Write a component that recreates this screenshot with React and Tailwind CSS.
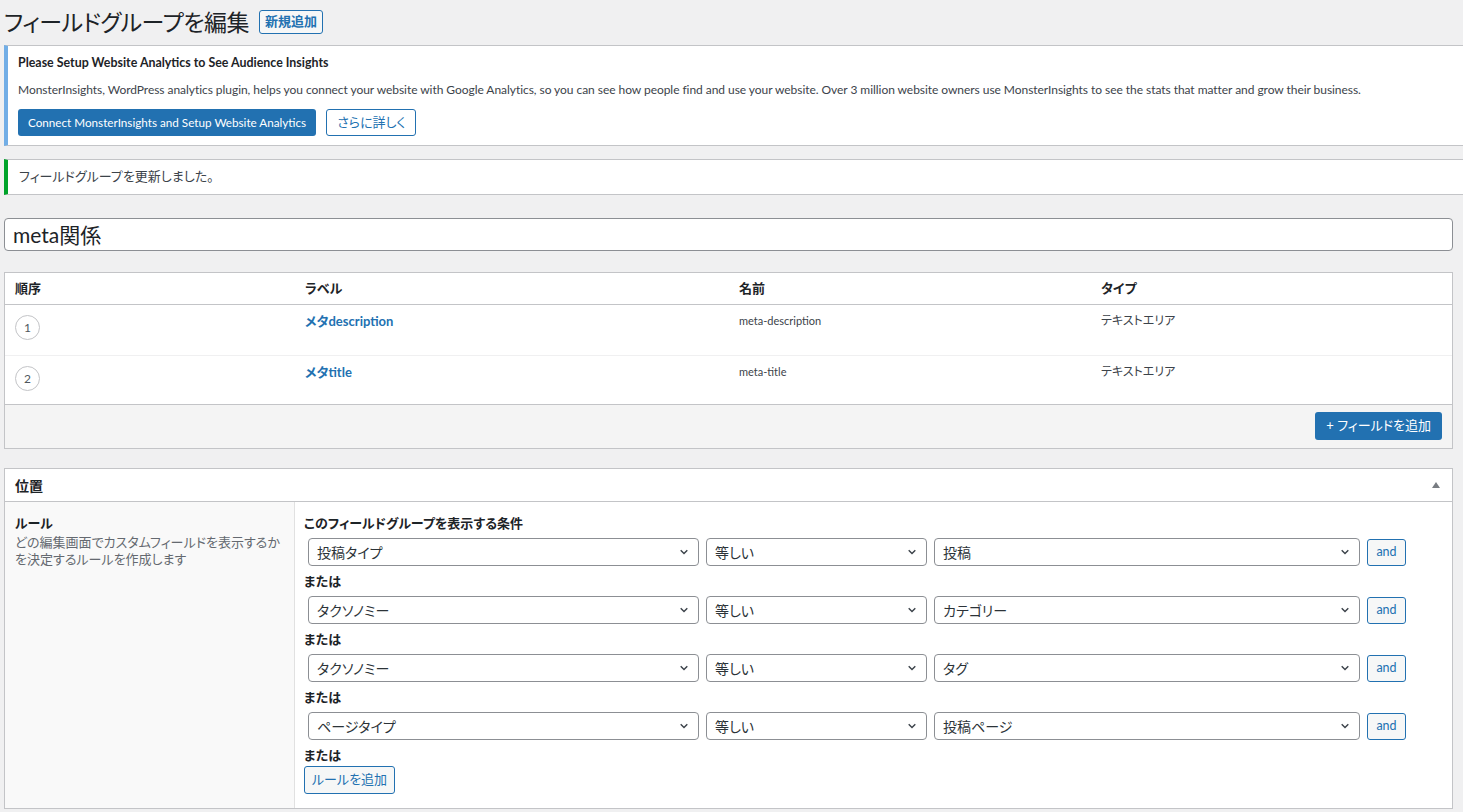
import { useState } from "react";

const fields = [
  { order: 1, label: "メタdescription", name: "meta-description", type: "テキストエリア" },
  { order: 2, label: "メタtitle", name: "meta-title", type: "テキストエリア" },
];

const rules = [
  { param: "投稿タイプ", op: "等しい", value: "投稿" },
  { param: "タクソノミー", op: "等しい", value: "カテゴリー" },
  { param: "タクソノミー", op: "等しい", value: "タグ" },
  { param: "ページタイプ", op: "等しい", value: "投稿ページ" },
];

function Chevron() {
  return (
    <svg width="12" height="12" viewBox="0 0 20 20" className="shrink-0 text-[#3c434a]">
      <path d="M4.5 7l5.5 5.5L15.5 7" fill="none" stroke="currentColor" strokeWidth="2.4" />
    </svg>
  );
}

function FakeSelect({ value, width }) {
  return (
    <div
      className={`flex h-[28px] items-center justify-between rounded-[4px] border border-[#8c8f94] bg-white pl-[8px] pr-[8px] text-[14px] text-[#2c3338] ${width}`}
    >
      <span>{value}</span>
      <Chevron />
    </div>
  );
}

function RuleRow({ rule }) {
  return (
    <div className="ml-[4px] flex items-center gap-[7px]">
      <FakeSelect value={rule.param} width="w-[391px]" />
      <FakeSelect value={rule.op} width="w-[221px]" />
      <FakeSelect value={rule.value} width="w-[426px]" />
      <button className="h-[27px] w-[39px] rounded-[3px] border border-[#2271b1] bg-[#f6f7f7] text-[12.5px] text-[#2271b1]">
        and
      </button>
    </div>
  );
}

export default function App() {
  const [title] = useState("meta関係");

  return (
    <div className="h-[812px] overflow-hidden bg-[#f0f0f1] pl-[4px] pr-[10px] font-['Lato','Noto_Sans_CJK_JP',sans-serif] text-[13px] text-[#3c434a] [font-feature-settings:'palt']">
      {/* page heading */}
      <div className="flex items-center pt-[7px]">
        <h1 className="text-[23px] leading-[30px] font-normal tracking-[-0.5px] text-[#1d2327]">フィールドグループを編集</h1>
        <button className="ml-[10px] h-[24px] rounded-[3px] border border-[#2271b1] bg-[#f6f7f7] px-[5px] text-[13px] font-semibold text-[#2271b1]">
          新規追加
        </button>
      </div>

      {/* analytics notice */}
      <div className="mr-[-20px] mt-[8px] border border-l-4 border-[#c3c4c7] border-l-[#72aee6] bg-white pb-[9px] pl-[10px] pt-[7px]">
        <p className="text-[12.4px] leading-[20px] font-bold text-[#1d2327]">Please Setup Website Analytics to See Audience Insights</p>
        <p className="mt-[7px] whitespace-nowrap text-[12px] leading-[20px] tracking-[-0.05px]">
          MonsterInsights, WordPress analytics plugin, helps you connect your website with Google Analytics, so you can see how
          people find and use your website. Over 3 million website owners use MonsterInsights to see the stats that matter and grow
          their business.
        </p>
        <div className="mt-[9px] flex gap-[10px]">
          <button className="h-[27px] rounded-[3px] bg-[#2271b1] px-[10px] text-[11.7px] text-white">
            Connect MonsterInsights and Setup Website Analytics
          </button>
          <button className="h-[27px] rounded-[3px] border border-[#2271b1] bg-white px-[10px] text-[13px] text-[#2271b1]">
            さらに詳しく
          </button>
        </div>
      </div>

      {/* updated notice */}
      <div className="mr-[-20px] mt-[13px] flex h-[36px] items-center border border-l-4 border-[#c3c4c7] border-l-[#00a32a] bg-white pl-[11px]">
        フィールドグループを更新しました。
      </div>

      {/* title input */}
      <div className="mt-[23px] flex h-[33px] items-center rounded-[4px] border border-[#8c8f94] bg-white pl-[8px] text-[21px] text-[#1d2327]">
        {title}
      </div>

      {/* field list */}
      <div className="mt-[21px] border border-[#c3c4c7] bg-white">
        <div className="grid h-[32px] grid-cols-[290px_434px_362px_1fr] items-center border-b border-[#c3c4c7] text-[13px] font-bold text-[#1d2327]">
          <div className="pl-[10px]">順序</div>
          <div className="pl-[10px]">ラベル</div>
          <div className="pl-[10px]">名前</div>
          <div className="pl-[10px]">タイプ</div>
        </div>
        {fields.map((f, i) => (
          <div
            key={f.order}
            className={`grid grid-cols-[290px_434px_362px_1fr] items-start ${i > 0 ? "h-[49px] border-t border-[#f0f0f1]" : "h-[50px]"}`}
          >
            <div className="pl-[10px] pt-[10px]">
              <span className="flex h-[25px] w-[25px] items-center justify-center rounded-full border border-[#c3c4c7] text-[12px] text-[#50575e]">
                {f.order}
              </span>
            </div>
            <div className="pl-[10px] pt-[6px] text-[13px] leading-[20px] font-bold text-[#2271b1]">{f.label}</div>
            <div className="pl-[10px] pt-[6px] text-[11px] leading-[20px]">{f.name}</div>
            <div className="pl-[10px] pt-[6px] text-[12px] leading-[20px]">{f.type}</div>
          </div>
        ))}
        <div className="flex h-[44px] justify-end border-t border-[#c3c4c7] bg-[#f4f4f4] pr-[10px] pt-[7px]">
          <button className="h-[28px] rounded-[3px] bg-[#2271b1] px-[11px] text-[13px] text-white">+ フィールドを追加</button>
        </div>
      </div>

      {/* location rules */}
      <div className="mt-[19px] border border-[#c3c4c7] bg-white">
        <div className="flex h-[33px] items-center justify-between border-b border-[#c3c4c7] pl-[10px] pr-[12px]">
          <span className="text-[14px] font-bold text-[#1d2327]">位置</span>
          <svg width="8" height="6" viewBox="0 0 8 6">
            <path d="M0 6L4 0L8 6Z" fill="#787c82" />
          </svg>
        </div>
        <div className="flex">
          <div className="w-[290px] shrink-0 border-r border-[#e1e1e1] bg-[#f9f9f9] pl-[10px] pr-[4px] pt-[11px]">
            <div className="leading-[20px] font-bold text-[#1d2327]">ルール</div>
            <p className="mt-[1px] leading-[17px] text-[#646970]">
              どの編集画面でカスタムフィールドを表示するか
              <br />
              を決定するルールを作成します
            </p>
          </div>
          <div className="flex flex-col gap-[5px] pb-[14px] pl-[9px] pt-[11px]">
            <div className="leading-[20px] font-bold text-[#1d2327]">このフィールドグループを表示する条件</div>
            {rules.map((r, i) => (
              <div key={i} className="flex flex-col gap-[5px]">
                <RuleRow rule={r} />
                <div className="leading-[20px] font-bold text-[#1d2327]">または</div>
              </div>
            ))}
            <button className="-mt-[4px] h-[28px] w-[91px] rounded-[3px] border border-[#2271b1] bg-[#f6f7f7] text-[13px] text-[#2271b1]">
              ルールを追加
            </button>
          </div>
        </div>
      </div>
    </div>
  );
}
